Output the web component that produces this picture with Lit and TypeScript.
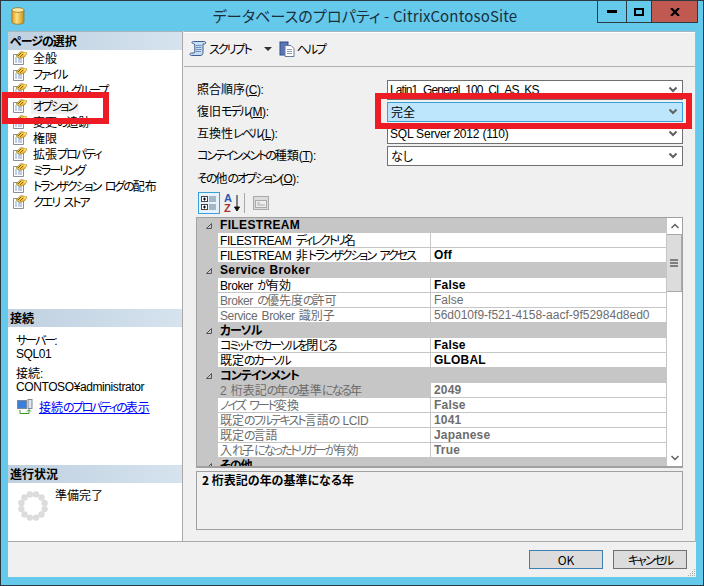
import { LitElement, html, css, svg } from "lit";
import { customElement } from "lit/decorators.js";

const jp = (s: string) =>
  s
    .split(/( +|[\u3040-\u30ff]+|[A-Za-z0-9¥_:.()\-]+)/)
    .filter(Boolean)
    .map((p) =>
      p[0] === " "
        ? html`<span class="sp">${p}</span>`
        : /^[\u3040-\u30ff]/.test(p)
          ? html`<span class="k">${p}</span>`
          : /^[A-Za-z0-9¥_:.()\-]/.test(p)
            ? html`<span class="l">${p}</span>`
            : p
    );

const pageIcon = html`<svg width="16" height="16" viewBox="0 0 16 16">
  <path d="M1.5 4.500h10v10h-10z" fill="#fff" stroke="#8a8f9a"/>
  <path d="M3 8h2M6 8h4M3 10h2M6 10h4M3 12h2M6 12h4" stroke="#7f9fd0"/>
  <path d="M4 6L9 1.500l6 1.500-2 3.500-5 2z" fill="#f2c53d" stroke="#8f7115" stroke-width=".6"/>
  <path d="M6 6l3-3M8 7l3-3" stroke="#7a5c10" stroke-width=".9"/>
  <path d="M12 2.500l2.500.5-1.500 2.500z" fill="#ffe98a"/>
</svg>`;

type Row =
  | { c: string }
  | { n: string; v?: string; dim?: boolean; bold?: boolean; sel?: boolean };

const rows: Row[] = [
  { c: "FILESTREAM" },
  { n: "FILESTREAM ディレクトリ名", v: "", bold: true },
  { n: "FILESTREAM 非トランザクション アクセス", v: "Off", bold: true },
  { c: "Service Broker" },
  { n: "Broker が有効", v: "False", bold: true },
  { n: "Broker の優先度の許可", v: "False", dim: true },
  { n: "Service Broker 識別子", v: "56d010f9-f521-4158-aacf-9f52984d8ed0", dim: true },
  { c: "カーソル" },
  { n: "コミットでカーソルを閉じる", v: "False", bold: true },
  { n: "既定のカーソル", v: "GLOBAL", bold: true },
  { c: "コンテインメント" },
  { n: "2 桁表記の年の基準になる年", v: "2049", dim: true, bold: true, sel: true },
  { n: "ノイズ ワード変換", v: "False", dim: true, bold: true },
  { n: "既定のフルテキスト言語の LCID", v: "1041", dim: true, bold: true },
  { n: "既定の言語", v: "Japanese", dim: true, bold: true },
  { n: "入れ子になったトリガーが有効", v: "True", dim: true, bold: true },
  { c: "その他" },
];

const pages = ["全般", "ファイル", "ファイル グループ", "オプション", "変更の追跡", "権限", "拡張プロパティ", "ミラーリング", "トランザクション ログの配布", "クエリ ストア"];

const chevron = html`<svg width="10" height="8" viewBox="0 0 10 8"><path d="M1.500 1.500L5 5l3.500-3.500" fill="none" stroke="#606060" stroke-width="2"/></svg>`;

const spokes = Array.from({ length: 12 }, (_, i) => {
  const a = ((i * 30 + 15) * Math.PI) / 180;
  return svg`<circle cx=${15 + 12 * Math.cos(a)} cy=${15 + 12 * Math.sin(a)} r="3.2" fill="#dcdcdc"/>`;
});

@customElement("app-root")
export class AppRoot extends LitElement {
  static styles = css`
    :host {
      display: block;
      width: 704px;
      height: 586px;
      font: 12px "Noto Sans CJK JP", "Liberation Sans", sans-serif;
      font-feature-settings: "palt";
      color: #000;
    }
    * { box-sizing: border-box; }
    .k { letter-spacing: -2px; }
    .l { font-family: "Liberation Sans", sans-serif; letter-spacing: -.4px; }
    .sp { font-family: "Liberation Sans", sans-serif; letter-spacing: 1px; }
    .win {
      position: relative;
      width: 704px;
      height: 586px;
      background: #65c9ec;
      border: 1px solid #2b3a40;
      display: flex;
      flex-direction: column;
      overflow: hidden;
    }
    .title { height: 30px; flex: none; display: flex; align-items: flex-start; }
    .dbicon { margin: 6px 0 0 10px; flex: none; }
    .title-text {
      flex: 1;
      text-align: center;
      font-size: 15px;
      line-height: 20px;
      margin-top: 5px;
      color: #1a2f3a;
      padding-left: 108px;
      letter-spacing: .15px;
      white-space: nowrap;
    }
    .ctrls { display: flex; margin-right: 5px; height: 22px; border: 1px solid #2b3a40; border-top: none; flex: none; }
    .ctrl { display: flex; align-items: center; justify-content: center; border-left: 1px solid #2b3a40; height: 21px; }
    .ctrl.min { width: 28px; border-left: none; }
    .ctrl.max { width: 25px; }
    .ctrl.close { width: 46px; background: #c05a50; }
    .body { margin: 0 7px; height: 546px; flex: none; background: #f0f0f0; display: flex; flex-direction: column; }
    .main { display: flex; height: 511px; flex: none; border-bottom: 1px solid #a9a9a9; border-right: 1px solid #b5b5b5; }
    .left {
      width: 175px;
      flex: none;
      background: #fff;
      border-right: 1px solid #a9a9a9;
      display: flex;
      flex-direction: column;
      border-top: 1px solid #a6b5c0;
    }
    .hdr {
      height: 18px;
      line-height: 18px;
      font-weight: 700;
      padding-left: 2px;
      background: linear-gradient(90deg, #bfd0df, #d6e3ef);
      flex: none;
    }
    .hdr .k { letter-spacing: -1px; }
    .pages { height: 259px; flex: none; }
    .page { display: flex; height: 16px; align-items: center; padding-left: 4px; gap: 4px; white-space: nowrap; line-height: 16px; }
    .page .t { padding: 0 1px; }
    .page.on .t { background: #f0f0f0; padding: 0 3px 0 2px; margin-left: -1px; }
    .conn { height: 138px; flex: none; padding: 7px 0 0 8px; line-height: 12px; }
    .conn p { margin: 0 0 7px; white-space: nowrap; }
    .link { display: flex; align-items: center; gap: 6px; margin: -1px 0 0 1px; }
    .link a { color: #0000ff; text-decoration: underline; white-space: nowrap; }
    .prog { display: flex; align-items: flex-start; padding: 6px 0 0 10px; gap: 7px; flex: 1; }
    .prog svg { margin-top: 2px; }
    .prog span { margin-top: -2px; line-height: 16px; }
    .right {
      flex: 1;
      min-width: 0;
      display: flex;
      flex-direction: column;
      border-top: 1px solid #a6b5c0;
      border-left: 1px solid #f0f0f0;
    }
    .tb {
      height: 35px;
      flex: none;
      border-top: 1px solid #fff;
      border-bottom: 1px solid #b0b0b0;
      display: flex;
      align-items: center;
      padding: 0 0 2px 5px;
      gap: 2px;
    }
    .tbt { display: flex; align-items: center; gap: 2px; white-space: nowrap; }
    .arrow { width: 0; height: 0; border: 4px solid transparent; border-top: 4px solid #333; border-bottom: none; margin: 0 5px 0 11px; }
    .form { padding: 13px 12px 0 12px; flex: 1; display: flex; flex-direction: column; }
    .fr { display: flex; height: 22px; align-items: flex-start; flex: none; }
    .lbl { width: 191px; line-height: 16px; flex: none; margin-top: 1px; white-space: nowrap; padding-left: 1px; }
    .lbl.wide { width: auto; margin-top: 2px; }
    .combo {
      flex: 1;
      height: 20px;
      border: 1px solid #707070;
      background: #fff;
      display: flex;
      align-items: center;
      justify-content: space-between;
      padding: 0 4px 0 2px;
      font-family: "Liberation Sans", sans-serif;
      line-height: 18px;
    }
    .combo .tight { letter-spacing: -.9px; }
    .combo .mid { letter-spacing: -.2px; }
    .combo.jp { font-family: "Noto Sans CJK JP", sans-serif; padding-left: 3px; }
    .combo.hi { background: #bde6fd; border-color: #3aa0dc; }
    .tools { display: flex; align-items: center; height: 22px; margin-top: 2px; padding-left: 2px; flex: none; gap: 2px; }
    .tool { width: 22px; height: 22px; display: flex; align-items: center; justify-content: center; }
    .tool.az { width: 20px; }
    .tool.pp { width: 16px; }
    .tool.on { background: #e4f3fd; border: 1px solid #3aa0dc; }
    .sep { width: 1px; height: 20px; background: #a9a9a9; margin: 0 6px 0 0; }
    .grid {
      margin-top: 3px;
      height: 251px;
      flex: none;
      border: 1px solid #a0a0a0;
      border-bottom: 2px solid #a0a0a0;
      display: flex;
      background: #c6c6c6;
    }
    .list { flex: 1; min-width: 0; overflow: hidden; }
    .gr { display: flex; height: 15px; line-height: 13px; white-space: nowrap; }
    .gr .g { width: 21px; flex: none; background: #c6c6c6; display: flex; align-items: center; justify-content: center; padding-left: 3px; }
    .gr.cat { font-weight: 700; background: #c6c6c6; line-height: 14px; }
    .gr.cat .k { letter-spacing: -1px; }
    .gr.cat .l { letter-spacing: .35px; vertical-align: 1px; }
    .gr .cn { padding-left: 2px; }
    .gr .n { width: 213px; flex: none; background: #fff; border-right: 1px solid #c6c6c6; border-bottom: 1px solid #c6c6c6; padding-left: 2px; overflow: hidden; }
    .gr .v { flex: 1; min-width: 0; background: #fff; border-bottom: 1px solid #c6c6c6; padding-left: 3px; line-height: 15px; overflow: hidden; font-family: "Liberation Sans", sans-serif; }
    .gr .v.b { font-weight: 700; letter-spacing: .2px; }
    .gr.dim .n, .gr.dim .v { color: #6d6d6d; }
    .gr.sel .n { background: #c6c6c6; }
    .scroll { width: 16px; flex: none; background: #fff; display: flex; flex-direction: column; border-left: 1px solid #c6c6c6; }
    .sbtn { height: 16px; flex: none; display: flex; align-items: center; justify-content: center; background: #fff; }
    .thumb { height: 58px; background: #dcdcdc; border: 1px solid #a9a9a9; border-left: none; flex: none; display: flex; align-items: center; justify-content: center; margin-bottom: auto; }
    .desc { margin-top: 3px; height: 59px; flex: none; border: 1px solid #a0a0a0; font-weight: 700; padding: 0 0 0 5px; line-height: 15px; }
    .foot { flex: 1; display: flex; justify-content: flex-end; gap: 10px; padding: 8px 9px 0 0; position: relative; }
    .btn { width: 74px; height: 19px; background: #dcdcdc; border: 1px solid #707070; text-align: center; font: inherit; line-height: 17px; padding: 0; }
    .btn.def { border-color: #3c7fb1; }
    .grip { position: absolute; right: 0; bottom: 0; }
    .mark { position: absolute; border: 6px solid #ed1c24; pointer-events: none; }
    .m1 { left: 1px; top: 91px; width: 107px; height: 32px; }
    .m2 { left: 374px; top: 92px; width: 317px; height: 36px; }
  `;

  render() {
    return html`
      <div class="win">
        <div class="title">
          <svg class="dbicon" width="14" height="18" viewBox="0 0 14 18">
            <defs><linearGradient id="db" x1="0" x2="1"><stop offset="0" stop-color="#e0a020"/><stop offset=".4" stop-color="#fde080"/><stop offset="1" stop-color="#c89018"/></linearGradient></defs>
            <path d="M1 3v12c0 3 12 3 12 0V3z" fill="url(#db)" stroke="#8a6a18" stroke-width=".7"/>
            <ellipse cx="7" cy="3" rx="6" ry="2.300" fill="#fbe9a0" stroke="#8a6a18" stroke-width=".7"/>
          </svg>
          <div class="title-text">データベースのプロパティ - CitrixContosoSite</div>
          <div class="ctrls">
            <div class="ctrl min"><svg width="10" height="3"><rect width="10" height="3" fill="#000"/></svg></div>
            <div class="ctrl max"><svg width="10" height="8"><rect x="1" y="1" width="8" height="6" fill="none" stroke="#000" stroke-width="2"/></svg></div>
            <div class="ctrl close"><svg width="10" height="8"><path d="M1 0l8 8M9 0l-8 8" stroke="#000" stroke-width="2.200"/></svg></div>
          </div>
        </div>

        <div class="body">
          <div class="main">
            <div class="left">
              <div class="hdr">${jp("ページの選択")}</div>
              <div class="pages">
                ${pages.map((p, i) => html`<div class="page ${i === 3 ? "on" : ""}">${pageIcon}<span class="t">${jp(p)}</span></div>`)}
              </div>
              <div class="hdr">接続</div>
              <div class="conn">
                <p>${jp("サーバー:")}<br />${jp("SQL01")}</p>
                <p>${jp("接続:")}<br />${jp("CONTOSO¥administrator")}</p>
                <div class="link">
                  <svg width="16" height="16" viewBox="0 0 16 16">
                    <rect x="0.5" y="1.500" width="9" height="8" fill="#3a7fdc" stroke="#7a8a9a"/>
                    <rect x="11" y="0.500" width="4" height="9" fill="#dde4ee" stroke="#7a8a9a"/>
                    <path d="M3 11v3.500h9v-3.500M10 12.500l2-2 2 2" fill="none" stroke="#3a9a20"/>
                  </svg>
                  <a>${jp("接続のプロパティの表示")}</a>
                </div>
              </div>
              <div class="hdr">進行状況</div>
              <div class="prog">
                <svg width="30" height="30" viewBox="0 0 30 30">${spokes}</svg>
                <span>準備完了</span>
              </div>
            </div>
            <div class="right">
              <div class="tb">
                <div class="tbt">
                  <svg width="18" height="17" viewBox="0 0 18 17">
                    <path d="M4.500 1.500h11c1.500 0 1.500 2.500 0 2.500H14v8.500c0 2-1 3-3 3H2.500c-2 0-2-2.500 0-2.500H5c.5 0 .8-.5.8-1V5c0-1.500-3-1.500-3-2.500 0-.5.800-1 1.700-1z" fill="#c9dbef" stroke="#3a5f94"/>
                    <path d="M7 5.500h5.500M7 7.500h5.500M7 9.500h5.500M7 11.500h5" stroke="#6f90b8"/>
                  </svg>
                  <span>${jp("スクリプト")}</span>
                </div>
                <span class="arrow"></span>
                <div class="tbt">
                  <svg width="16" height="16" viewBox="0 0 16 16">
                    <rect x="1" y="1" width="8" height="13" fill="#5a76b8" stroke="#2e4a8a"/>
                    <path d="M6 4.500h6l3 3v8H6z" fill="#fff" stroke="#6a7a9a"/>
                    <path d="M8 8.500h5M8 10.500h5M8 12.500h5" stroke="#8a9ab0"/>
                  </svg>
                  <span>${jp("ヘルプ")}</span>
                </div>
              </div>
              <div class="form">
                <div class="fr"><span class="lbl">${jp("照合順序(")}<u class="l">C</u>${jp("):")}</span><div class="combo"><span class="tight">Latin1_General_100_CI_AS_KS</span>${chevron}</div></div>
                <div class="fr"><span class="lbl">${jp("復旧モデル(")}<u class="l">M</u>${jp("):")}</span><div class="combo jp hi"><span>完全</span>${chevron}</div></div>
                <div class="fr"><span class="lbl">${jp("互換性レベル(")}<u class="l">L</u>${jp("):")}</span><div class="combo"><span class="mid">SQL Server 2012 (110)</span>${chevron}</div></div>
                <div class="fr"><span class="lbl">${jp("コンテインメントの種類(")}<u class="l">T</u>${jp("):")}</span><div class="combo jp"><span>なし</span>${chevron}</div></div>
                <div class="fr"><span class="lbl wide">${jp("その他のオプション(")}<u class="l">O</u>${jp("):")}</span></div>
                <div class="tools">
                  <div class="tool on">
                    <svg width="18" height="18" viewBox="0 0 18 18">
                      <rect x="1.500" y="2.500" width="6" height="5" fill="#fff" stroke="#444"/>
                      <rect x="1.500" y="10.500" width="6" height="5" fill="#fff" stroke="#444"/>
                      <path d="M3 5h3M4.500 3.500v3M3 13h3M4.500 11.500v3" stroke="#000"/>
                      <path d="M9 3h7M9 5h7M9 7h7M9 11h7M9 13h7M9 15h7" stroke="#6a7a8a"/>
                    </svg>
                  </div>
                  <div class="tool az">
                    <svg width="18" height="20" viewBox="0 0 18 20">
                      <text x="1" y="9" font-size="11" font-weight="700" font-family="Liberation Sans" fill="#2a5ab0">A</text>
                      <text x="1" y="19" font-size="11" font-weight="700" font-family="Liberation Sans" fill="#a83030">Z</text>
                      <path d="M14 2v14M11.500 14L14 18l2.500-4z" stroke="#111" fill="#111"/>
                    </svg>
                  </div>
                  <div class="sep"></div>
                  <div class="tool pp">
                    <svg width="16" height="16" viewBox="0 0 16 16">
                      <rect x=".5" y="1.500" width="15" height="13" fill="#dcdcdc" stroke="#a9a9a9"/>
                      <rect x="2.500" y="5.500" width="11" height="7" fill="#eee" stroke="#a9a9a9"/>
                      <path d="M4 8h3M4 10h8" stroke="#a9a9a9"/>
                    </svg>
                  </div>
                </div>
                <div class="grid">
                  <div class="list">
                    ${rows.map((r) =>
                      "c" in r
                        ? html`<div class="gr cat"><span class="g"><svg width="8" height="8"><path d="M6.500 1.500v5h-5z" fill="none" stroke="#555"/></svg></span><span class="cn">${jp(r.c)}</span></div>`
                        : html`<div class="gr ${r.dim ? "dim" : ""} ${r.sel ? "sel" : ""}"><span class="g"></span><span class="n">${jp(r.n)}</span><span class="v ${r.bold ? "b" : ""}">${r.v}</span></div>`
                    )}
                  </div>
                  <div class="scroll">
                    <div class="sbtn"><svg width="10" height="8"><path d="M1.500 6L5 2.500 8.500 6" fill="none" stroke="#606060" stroke-width="1.500"/></svg></div>
                    <div class="thumb"><svg width="8" height="8"><path d="M0 1h8M0 4h8M0 7h8" stroke="#606060" stroke-width="1.500"/></svg></div>
                    <div class="sbtn"><svg width="10" height="8"><path d="M1.500 2L5 5.500 8.500 2" fill="none" stroke="#606060" stroke-width="1.500"/></svg></div>
                  </div>
                </div>
                <div class="desc">2 桁表記の年の基準になる年</div>
              </div>
            </div>
          </div>
          <div class="foot">
            <button class="btn def">OK</button>
            <button class="btn">${jp("キャンセル")}</button>
            <svg class="grip" width="10" height="10"><g fill="#a9a9a9"><rect x="8" y="2" width="1" height="1"/><rect x="6" y="4" width="1" height="1"/><rect x="8" y="4" width="1" height="1"/><rect x="4" y="6" width="1" height="1"/><rect x="6" y="6" width="1" height="1"/><rect x="8" y="6" width="1" height="1"/><rect x="2" y="8" width="1" height="1"/><rect x="4" y="8" width="1" height="1"/><rect x="6" y="8" width="1" height="1"/><rect x="8" y="8" width="1" height="1"/></g></svg>
          </div>
        </div>
        <div class="mark m1"></div>
        <div class="mark m2"></div>
      </div>
    `;
  }
}
